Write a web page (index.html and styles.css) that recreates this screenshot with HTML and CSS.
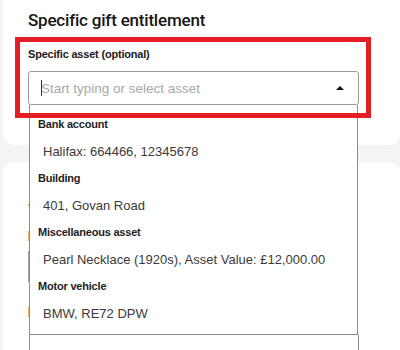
FILE: index.html
```html
<!DOCTYPE html>
<html>
  <head>
    <title>Specific gift entitlement</title>
    <link rel="stylesheet" href="styles.css">
  </head>
  <body>
    <div class="page">
      <div class="card card-top">
        <h2 class="card-title">Specific gift entitlement</h2>
        <div class="field">
          <label class="field-label">Specific asset (optional)</label>
          <div class="combo">
            <div class="combo-input">
              <span class="caret"></span>
              <span class="placeholder">Start typing or select asset</span>
              <span class="arrow"></span>
            </div>
            <div class="menu">
              <div class="menu-list">
                <div class="group">Bank account</div>
                <div class="option">Halifax: 664466, 12345678</div>
                <div class="group">Building</div>
                <div class="option">401, Govan Road</div>
                <div class="group">Miscellaneous asset</div>
                <div class="option">Pearl Necklace (1920s), Asset Value: £12,000.00</div>
                <div class="group">Motor vehicle</div>
                <div class="option">BMW, RE72 DPW</div>
              </div>
              <div class="menu-footer"></div>
            </div>
          </div>
        </div>
      </div>

      <div class="card card-bottom">
        <span class="peek peek-dot"></span>
        <span class="peek peek-orange"></span>
        <span class="peek peek-grey"></span>
        <span class="peek peek-orange peek-last"></span>
      </div>
    </div>
  </body>
</html>
```

FILE: styles.css
```css
body {
  margin: 0;
  background-color: #f4f4f4;
  font-family: "Liberation Sans", Arial, sans-serif;
  color: #1d1d1d;
}
.page {
  padding-left: 3px;
}
.card {
  background-color: #fff;
}
.card-top {
  height: 145px;
  border-radius: 0 0 10px 10px;
  padding: 9px 0 0 12px;
  box-sizing: border-box;
}
.card-title {
  margin: 0 0 6px 13px;
  font-family: Roboto, "Liberation Sans", sans-serif;
  font-size: 17px;
  font-weight: 500;
  letter-spacing: -0.2px;
  line-height: 22px;
  color: #161616;
}
.field {
  position: relative;
  width: 356px;
  height: 81px;
  box-sizing: border-box;
  padding: 11px 0 0 13px;
}
/* highlight frame sits over the open menu */
.field::after {
  content: "";
  position: absolute;
  inset: 0;
  border: 5px solid #e31d23;
  pointer-events: none;
  z-index: 3;
}
.field-label {
  display: block;
  font-size: 11px;
  font-weight: 700;
  letter-spacing: -0.2px;
  line-height: 13px;
  color: #1a1a1a;
}
.combo {
  position: relative;
  width: 331px;
  margin-top: 10px;
}
.combo-input {
  display: flex;
  align-items: center;
  height: 34px;
  box-sizing: border-box;
  border: 1px solid #9a9a9a;
  border-radius: 3px;
  padding: 0 14px 0 12px;
}
.caret {
  width: 1px;
  height: 16px;
  margin-right: -1px;
  background-color: #333;
}
.placeholder {
  flex: 1;
  font-size: 13.5px;
  color: #a8a8a8;
}
.arrow {
  width: 0;
  height: 0;
  border-left: 4px solid transparent;
  border-right: 4px solid transparent;
  border-bottom: 4px solid #111;
}
.menu {
  position: absolute;
  top: 100%;
  left: 1px;
  right: 1px;
  z-index: 2;
}
.menu-list {
  background-color: #fff;
  border-left: 1px solid #8c8c8c;
  border-right: 1px solid #8c8c8c;
  border-bottom: 1px solid #8c8c8c;
  padding: 6px 0 7px;
}
.group,
.option {
  height: 27px;
  line-height: 27px;
  white-space: nowrap;
}
.group {
  padding-left: 8px;
  font-size: 11px;
  font-weight: 700;
  letter-spacing: -0.2px;
  color: #1e1e1e;
}
.option {
  padding-left: 13px;
  font-size: 13px;
  color: #3a3a3a;
}
.menu-footer {
  height: 20px;
  margin-right: -1px;
  background-color: #fff;
  border-left: 1px solid #8c8c8c;
  border-right: 1px solid #8c8c8c;
}
.card-bottom {
  margin-top: 17px;
  height: 200px;
  border-radius: 10px 10px 0 0;
  padding: 42px 0 0 25px;
  box-sizing: border-box;
}
.peek {
  display: block;
  width: 10px;
  background-color: #f2ae5c;
}
.peek-dot {
  height: 2px;
}
.peek-orange {
  height: 10px;
  margin-top: 25px;
}
.peek-grey {
  height: 31px;
  margin-top: 10px;
  background-color: #a0a0a0;
}
.peek-last {
  margin-top: 25px;
}
```
